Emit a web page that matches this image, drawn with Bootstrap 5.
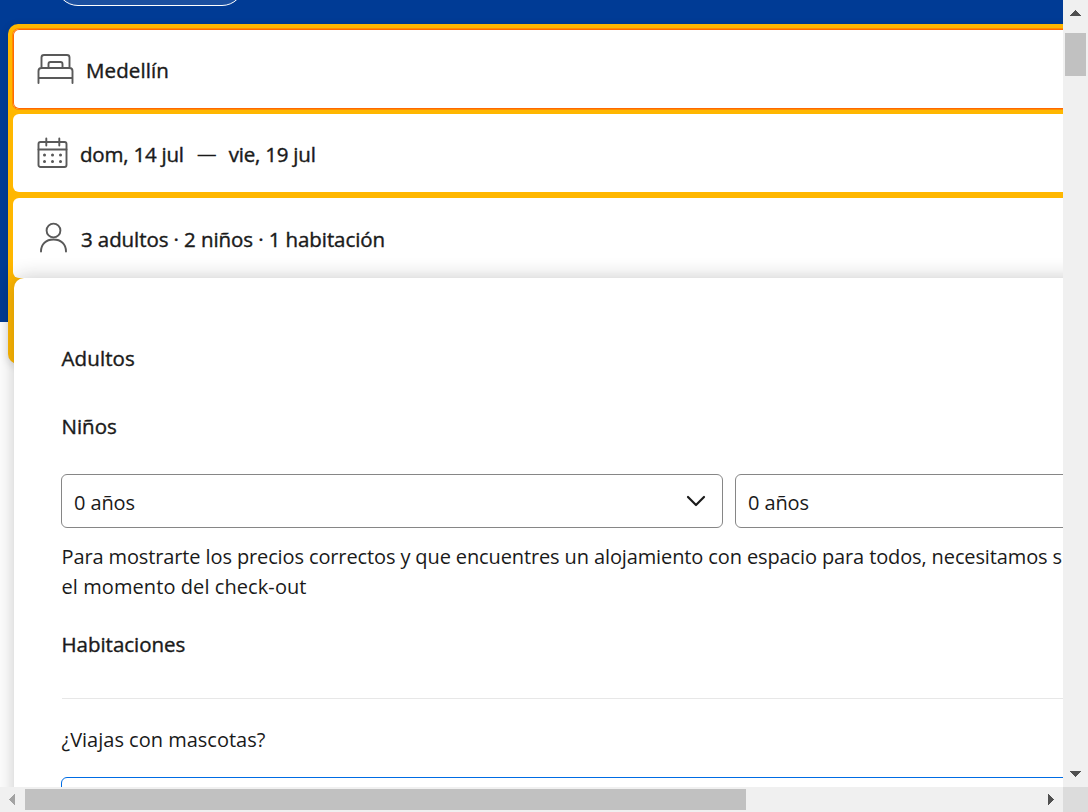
<!DOCTYPE html>
<html lang="es">
<head>
<meta charset="utf-8">
<meta name="viewport" content="width=device-width, initial-scale=1">
<title>Buscar alojamiento</title>
<link href="https://cdn.jsdelivr.net/npm/bootstrap@5.3.0/dist/css/bootstrap.min.css" rel="stylesheet">
<style>
body { font-family: "Open Sans", "Noto Sans", sans-serif; font-size: 20px; line-height: 30px; color: #1a1a1a; }
.screen { display: grid; grid-template: 787px 25px / 1063px 25px; width: 1088px; height: 812px; }
.strong { font-size: 20.5px; -webkit-text-stroke: .4px #1a1a1a; }
.hero { background: #003b95; height: 322px; display: flow-root; }
.pill { width: 188px; height: 44px; margin: -38px 0 18px 56px; border: 1px solid #fff; border-radius: 22px; background: #1a4fa0; }
.searchbox { margin-left: 7.5px; width: 1400px; height: 340px; padding: 5px 5.5px; background: #ffb700; border-radius: 10px; box-shadow: 0 2px 8px rgba(26,26,26,.16); }
.field { height: 78px; margin-bottom: 6px; background: #fff; border-radius: 6px; padding-left: 24px; }
.field.active { height: 80px; margin-bottom: 5px; box-shadow: inset 0 0 0 1px #ff6a00, 0 0 0 1px #ff8c00; }
.field.open { height: 80px; }
.field .t { padding-top: 1px; }
.field.active .t { padding-top: 2px; }
.ico { fill: none; stroke: #595959; stroke-width: 1.9; stroke-linecap: round; flex: none; }
.popup { left: 13.5px; top: 278px; width: 1386px; height: 700px; padding: 65px 48px 0; background: #fff; border-radius: 10px; box-shadow: 0 0 20px rgba(26,26,26,.24); }
.age { width: 662px; height: 54px; border: 1px solid #868686; border-radius: 6px; padding: 0 15px 0 12px; flex: none; }
.age .t { padding-top: 3px; letter-spacing: -.1px; }
.bar { background: #f0f0f0; }
.thumb { background: #c1c1c1; }
.rule { height: 1px; background: #e7e7e7; margin: 39px 0 26px; }
.pets { height: 80px; border: 1px solid #006ce4; border-radius: 6px; margin-top: 22px; }
.t { white-space: nowrap; }
.dense { letter-spacing: -.12px; }
</style>
</head>
<body class="overflow-hidden bg-white">
<div class="screen">
  <main class="position-relative overflow-hidden">
    <div class="hero">
      <div class="pill"></div>
      <div class="searchbox d-flex flex-column">
        <div class="field active d-flex align-items-center">
          <svg class="ico" width="38" height="32" viewBox="0 0 38 32"><path d="M4.500 15V4.500Q4.500 2 7 2H30Q32.500 2 32.500 4.500V15M11.500 15V11Q11.500 9 13.500 9H23.500Q25.500 9 25.500 11V15M1.500 30V18Q1.500 15 4.500 15H32.500Q35.500 15 35.500 18V30M1.500 25H35.500"/></svg>
          <span class="strong t" style="margin-left:11px;letter-spacing:.1px">Medellín</span>
        </div>
        <div class="field d-flex align-items-center">
          <svg class="ico" width="32" height="32" viewBox="0 0 32 32"><rect x="1.500" y="5" width="28" height="25" rx="2"/><path d="M1.500 12.500H29.500M9.300 1.500V8.500M22.300 1.500V8.500"/><path stroke-width="3" d="M7.500 18h.01M15.500 18h.01M23.500 18h.01M7.500 24.500h.01M15.500 24.500h.01M23.500 24.500h.01"/></svg>
          <span class="strong t" style="margin-left:11px;letter-spacing:-.22px">dom, 14 jul</span><span class="t" style="margin:0 12px 0 13px">—</span><span class="strong t" style="letter-spacing:-.22px">vie, 19 jul</span>
        </div>
        <div class="field open d-flex align-items-center">
          <svg class="ico" width="32" height="32" viewBox="0 0 32 32"><circle cx="16.500" cy="8.500" r="6.900"/><path d="M4 29.500C4 22 9 17.500 16.500 17.500S29 22 29 29.500"/></svg>
          <span class="strong t" style="margin-left:12px;letter-spacing:-.09px">3 adultos · 2 niños · 1 habitación</span>
        </div>
      </div>
    </div>
    <section class="popup position-absolute">
      <div class="strong"><span class="t" style="letter-spacing:.1px">Adultos</span></div>
      <div class="strong" style="margin-top:38px"><span class="t">Niños</span></div>
      <div class="d-flex" style="gap:12px;margin:33px 0 0 -.5px">
        <div class="age d-flex align-items-center justify-content-between"><span class="t">0 años</span>
          <svg class="mt-0" width="22" height="14" viewBox="0 0 22 14" fill="none" stroke="#1a1a1a" stroke-width="2.200" stroke-linecap="round" stroke-linejoin="round"><path d="M3 3L11 11L19 3"/></svg></div>
        <div class="age d-flex align-items-center"><span class="t">0 años</span></div>
      </div>
      <div style="margin-top:14px"><span class="t dense">Para mostrarte los precios correctos y que encuentres un alojamiento con espacio para todos, necesitamos s</span></div>
      <div><span class="t" style="letter-spacing:.08px">el momento del check-out</span></div>
      <div class="strong" style="margin-top:27px"><span class="t" style="letter-spacing:-.03px">Habitaciones</span></div>
      <div class="rule"></div>
      <div><span class="t">¿Viajas con mascotas?</span></div>
      <div class="pets" style="margin-left:-.5px"></div>
    </section>
  </main>
  <div class="bar d-flex flex-column align-items-center justify-content-between">
    <svg width="25" height="33" shape-rendering="crispEdges"><path d="M7 16L12.500 10L18 16Z" fill="#505050"/></svg>
    <div class="thumb mb-auto" style="width:21px;height:43px"></div>
    <svg width="25" height="25" shape-rendering="crispEdges"><path d="M7 9L12.500 15L18 9Z" fill="#505050"/></svg>
  </div>
  <div class="bar d-flex align-items-center">
    <svg width="25" height="25" shape-rendering="crispEdges"><path d="M15 7L9 12.500L15 18Z" fill="#a3a3a3"/></svg>
    <div class="thumb me-auto" style="width:721px;height:21px"></div>
    <svg width="25" height="25" shape-rendering="crispEdges"><path d="M10 7L16 12.500L10 18Z" fill="#505050"/></svg>
  </div>
  <div style="background:#dcdcdc"></div>
</div>
<script src="https://cdn.jsdelivr.net/npm/bootstrap@5.3.0/dist/js/bootstrap.bundle.min.js"></script>
</body>
</html>
